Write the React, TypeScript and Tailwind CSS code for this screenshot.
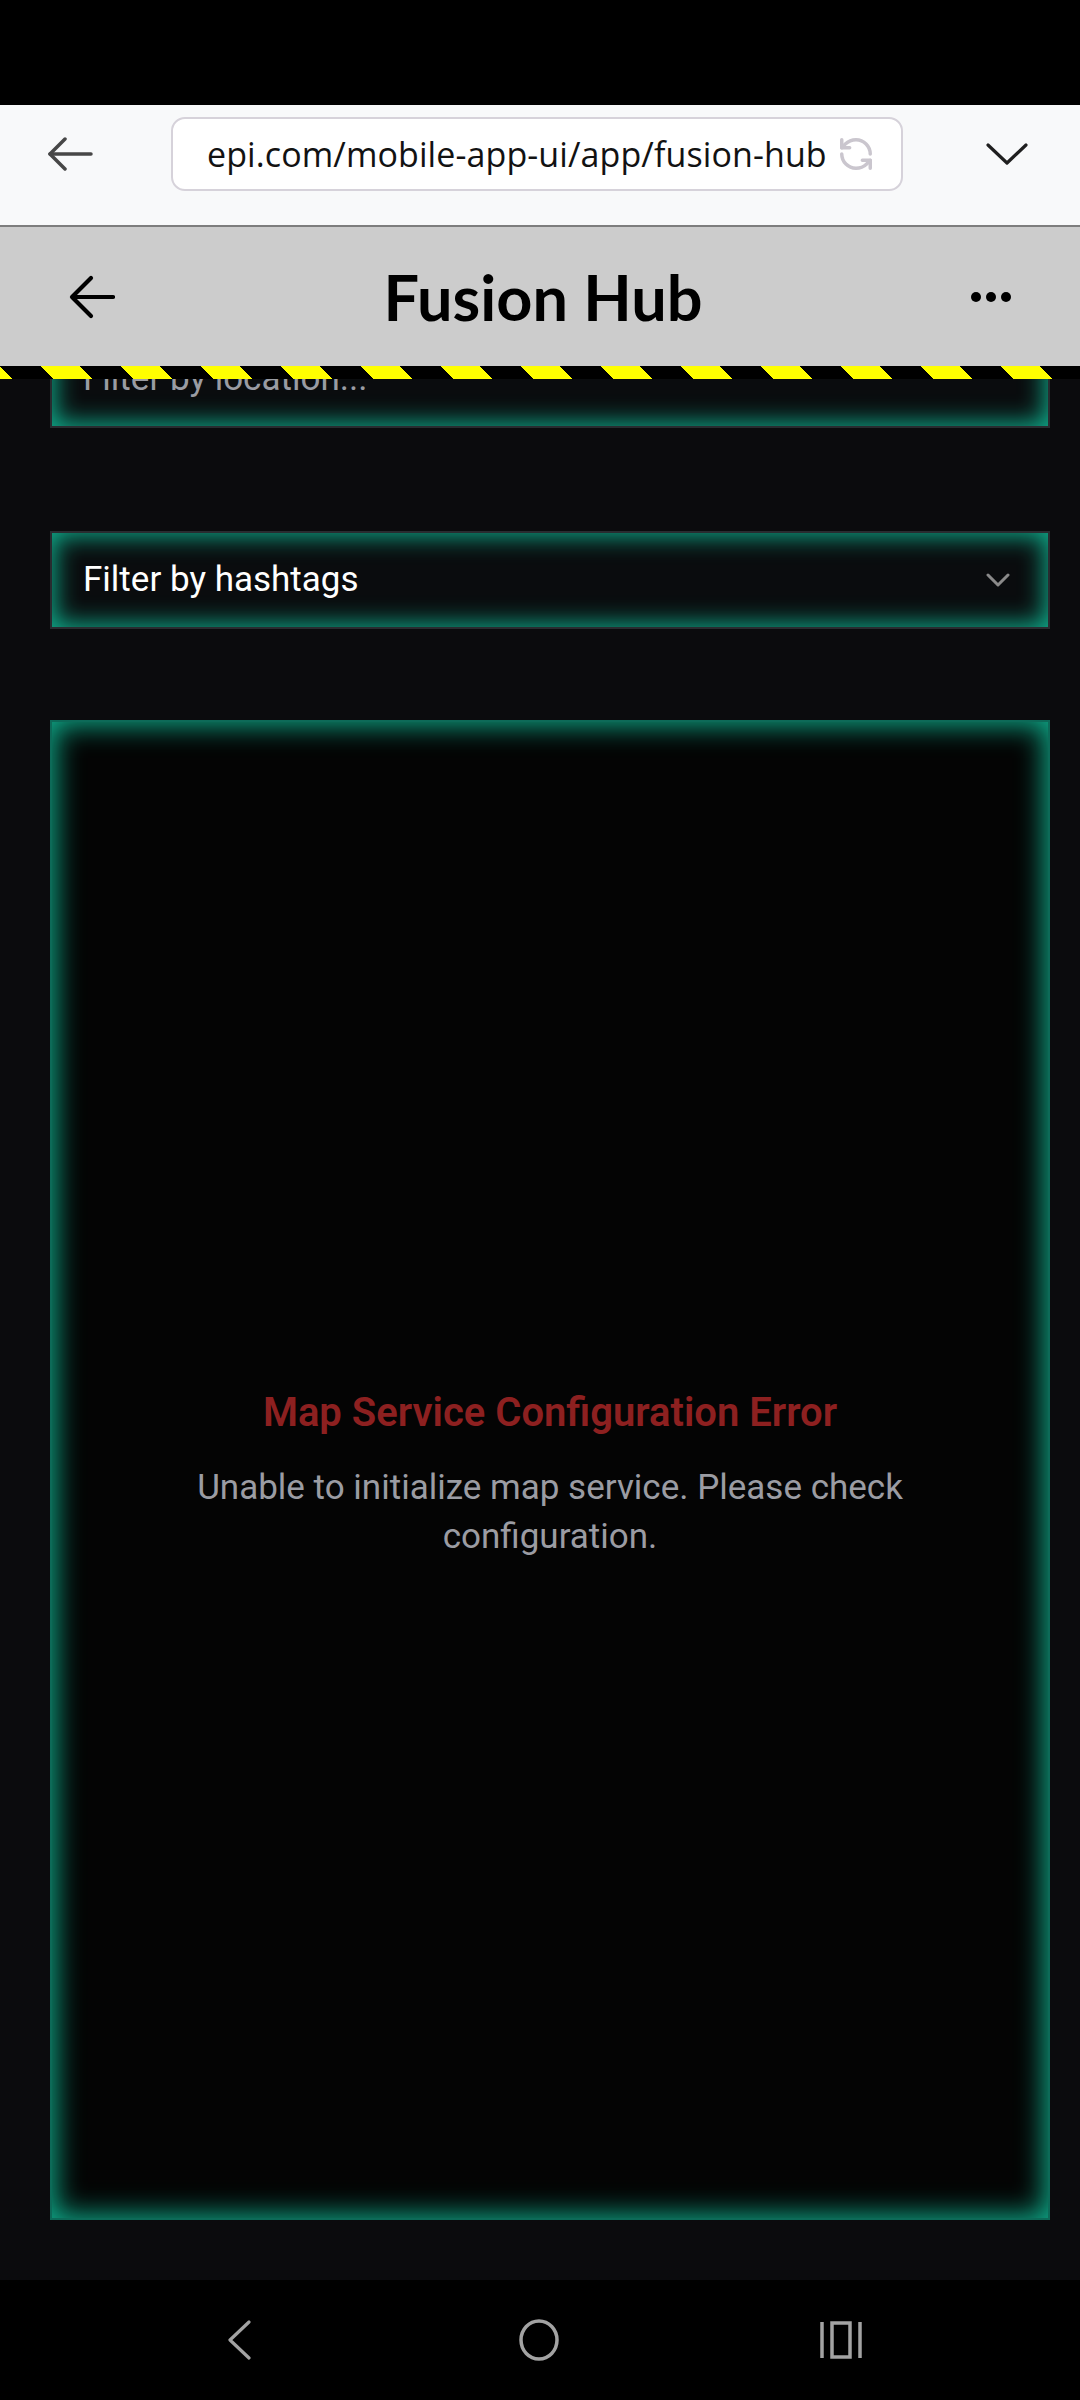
import React from "react";
import { RefreshCcw } from "lucide-react";

export default function App() {
  return (
    <div className="w-[1080px] h-[2400px] flex flex-col bg-black overflow-hidden font-['Roboto',sans-serif]">
      {/* status bar */}
      <div className="h-[105px] bg-black shrink-0" />

      {/* browser bar */}
      <div className="h-[122px] shrink-0 bg-[#f8f9fa] border-b-2 border-[#7d7d7d] flex items-center pb-[22px]">
        <div className="w-[171px] flex items-center pl-[47px]">
          <svg width="46" height="34" viewBox="0 0 46 34" fill="none" stroke="#474747" strokeWidth="3.5" strokeLinecap="round" strokeLinejoin="round">
            <path d="M44 17H3" />
            <path d="M18 2L3 17L18 32" />
          </svg>
        </div>
        <div className="w-[732px] h-[74px] rounded-[14px] border-2 border-[#d6d2da] bg-white flex items-center pl-[34px] pr-[26px]">
          <span className="flex-1 text-[34px] text-[#121212] font-['Open_Sans',sans-serif] tracking-[0.1px] whitespace-nowrap overflow-hidden">
            epi.com/mobile-app-ui/app/fusion-hub
          </span>
          <RefreshCcw size={38} color="#cac6ce" strokeWidth={2.2} />
        </div>
        <div className="flex-1 flex items-center justify-end pr-[52px]">
          <svg width="42" height="22" viewBox="0 0 42 22" fill="none" stroke="#1f1f1f" strokeWidth="3.2" strokeLinecap="round" strokeLinejoin="round">
            <path d="M2 2L21 20L40 2" />
          </svg>
        </div>
      </div>

      {/* main viewport */}
      <div className="flex-1 relative overflow-hidden bg-[#0b0b0d]">
        {/* app header over scrolled content */}
        <div className="absolute top-0 left-0 right-0 z-10 flex flex-col">
          <div className="h-[139px] bg-[#cccccc] flex items-center px-[69px]">
            <svg width="46" height="44" viewBox="0 0 46 44" fill="none" stroke="#000" strokeWidth="4.2" strokeLinecap="round" strokeLinejoin="round">
              <path d="M44 22H4" />
              <path d="M22 3L3 22L22 41" />
            </svg>
            <div className="flex-1 text-center text-[63px] font-bold text-black font-['Lato',sans-serif] leading-none">
              Fusion Hub
            </div>
            <div className="flex items-center gap-[5px]">
              <span className="w-[10px] h-[10px] rounded-full bg-black" />
              <span className="w-[10px] h-[10px] rounded-full bg-black" />
              <span className="w-[10px] h-[10px] rounded-full bg-black" />
            </div>
          </div>
          <div className="h-[13px] bg-[repeating-linear-gradient(45deg,#ffff00_0_28.28px,#000_28.28px_56.57px)] bg-[length:80px_13px] bg-[position:53px_0px]" />
        </div>

        {/* page content */}
        <div className="pt-[103px] pl-[50px] pr-[30px] flex flex-col">
          <div className="h-[98px] border-2 border-[#292c30] bg-[#0a0c0e] shadow-[inset_0_0_24px_3px_rgba(16,185,150,0.95)] flex items-center pl-[31px]">
            <span className="text-[35px] text-[#9a9ca3]">Filter by location...</span>
          </div>

          <div className="mt-[103px] h-[98px] border-2 border-[#292c30] bg-[#0a0c0e] shadow-[inset_0_0_24px_3px_rgba(16,185,150,0.95)] flex items-center pl-[31px] pr-[38px]">
            <span className="flex-1 text-[35px] text-white">Filter by hashtags</span>
            <svg width="24" height="16" viewBox="0 0 24 16" fill="none" stroke="#8a8a8a" strokeWidth="3" strokeLinecap="round" strokeLinejoin="round">
              <path d="M2 3L12 13L22 3" />
            </svg>
          </div>

          <div className="mt-[91px] h-[1500px] border-2 border-[#0d6a58] bg-[#040404] shadow-[inset_0_0_28px_3px_rgba(16,185,150,0.95)] flex flex-col items-center justify-center px-[80px] pt-[10px]">
            <div className="text-[40px] font-semibold text-[#8d2020] leading-[48px]">
              Map Service Configuration Error
            </div>
            <div className="mt-[26px] text-[35px] text-[#9b9ca3] leading-[49px] text-center max-w-[800px]">
              Unable to initialize map service. Please check configuration.
            </div>
          </div>
        </div>
      </div>

      {/* android nav bar */}
      <div className="h-[120px] shrink-0 bg-black flex items-center pl-[226px]">
        <svg width="26" height="40" viewBox="0 0 26 40" fill="none" stroke="#a3a3a3" strokeWidth="3.2" strokeLinecap="round" strokeLinejoin="round">
          <path d="M23 2L4 20L23 38" />
        </svg>
        <svg className="ml-[266px]" width="42" height="42" viewBox="0 0 42 42" fill="none" stroke="#a3a3a3" strokeWidth="3.5">
          <ellipse cx="21" cy="21" rx="18" ry="19" />
        </svg>
        <svg className="ml-[260px]" width="42" height="38" viewBox="0 0 42 38" fill="none" stroke="#a3a3a3" strokeWidth="3.5">
          <path d="M2 1V37" />
          <rect x="12" y="2" width="18" height="34" />
          <path d="M40 1V37" />
        </svg>
      </div>
    </div>
  );
}
